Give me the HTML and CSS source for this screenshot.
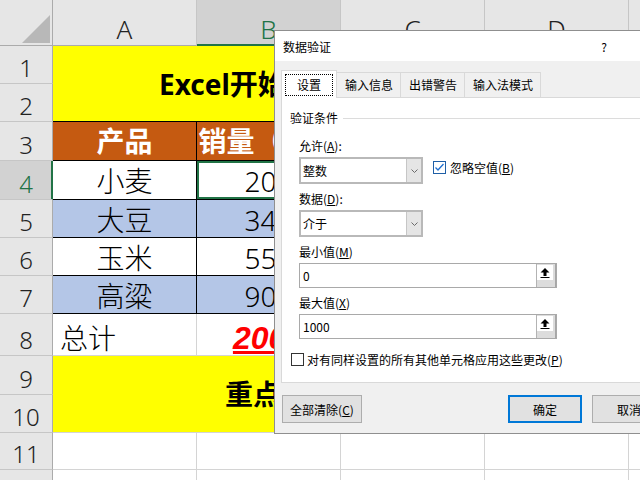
FILE: index.html
```html
<!DOCTYPE html>
<html lang="zh-CN">
<head>
<meta charset="utf-8">
<title>数据验证</title>
<link rel="stylesheet" href="styles.css">
</head>
<body>
<div class="sheet">
  <div class="corner"><svg width="28" height="28" viewBox="0 0 28 28"><polygon points="28,0 28,28 0,28" fill="#b8b8b8"/></svg></div>
  <div class="ch">A</div><div class="ch sel">B</div><div class="ch">C</div><div class="ch">D</div><div class="ch">E</div>

  <div class="rh">1</div>
  <div class="c banner top">Excel开始学习数据验证</div>
  <div class="rh">2</div>

  <div class="rh">3</div>
  <div class="c t hd">产品</div><div class="c t hd">销量（吨）</div><div class="c"></div><div class="c"></div><div class="c"></div>

  <div class="rh sel">4</div>
  <div class="c t d">小麦</div><div class="c t d cur">200</div><div class="c"></div><div class="c"></div><div class="c"></div>

  <div class="rh">5</div>
  <div class="c t d blue">大豆</div><div class="c t d blue">345</div><div class="c"></div><div class="c"></div><div class="c"></div>

  <div class="rh">6</div>
  <div class="c t d">玉米</div><div class="c t d">555</div><div class="c"></div><div class="c"></div><div class="c"></div>

  <div class="rh">7</div>
  <div class="c t d blue">高粱</div><div class="c t d blue">900</div><div class="c"></div><div class="c"></div><div class="c"></div>

  <div class="rh">8</div>
  <div class="c foot left">总计</div><div class="c foot total">2000</div><div class="c"></div><div class="c"></div><div class="c"></div>

  <div class="rh">9</div>
  <div class="c banner bottom">重点：数据验证设置</div>
  <div class="rh">10</div>

  <div class="rh">11</div>
  <div class="c"></div><div class="c"></div><div class="c"></div><div class="c"></div><div class="c"></div>

  <div class="rh">12</div>
  <div class="c"></div><div class="c"></div><div class="c"></div><div class="c"></div><div class="c"></div>
</div>

<div class="dlg">
  <div class="dlg-title">
    <span class="name">数据验证</span>
    <span class="tbtn">?</span>
    <span class="tbtn">✕</span>
  </div>
  <div class="dlg-body">
    <div class="tabs">
      <div class="tab active"><span class="focus">设置</span></div>
      <div class="tab">输入信息</div>
      <div class="tab">出错警告</div>
      <div class="tab">输入法模式</div>
    </div>
    <div class="panel">
      <div class="group"><span>验证条件</span><span class="rule"></span></div>
      <div class="fields">
        <div class="lbl first">允许(<u>A</u>):</div>
        <div class="row">
          <div class="combo"><span class="val">整数</span><span class="drop"><svg width="7" height="4" viewBox="0 0 7 4"><polyline points="0.5,0.5 3.5,3.5 6.5,0.5" fill="none" stroke="#6b6b6b" stroke-width="1"/></svg></span></div>
          <div class="chk ignore"><span class="box checked"><svg width="11" height="11" viewBox="0 0 11 11"><polyline points="1.5,5.5 4,8 9.5,2" fill="none" stroke="#1f6fcf" stroke-width="1.3"/></svg></span>忽略空值(<u>B</u>)</div>
        </div>
        <div class="lbl">数据(<u>D</u>):</div>
        <div class="combo"><span class="val">介于</span><span class="drop"><svg width="7" height="4" viewBox="0 0 7 4"><polyline points="0.5,0.5 3.5,3.5 6.5,0.5" fill="none" stroke="#6b6b6b" stroke-width="1"/></svg></span></div>
        <div class="lbl">最小值(<u>M</u>)</div>
        <div class="ref"><span class="val">0</span><span class="refbtn"><span class="face"><svg width="10" height="10" viewBox="0 0 10 10"><path d="M5 0 L9.5 4.5 L6.5 4.5 L6.5 8 L3.5 8 L3.5 4.5 L0.5 4.5 Z M0.5 9 H9.5 V10 H0.5 Z" fill="#000"/></svg></span></span></div>
        <div class="lbl">最大值(<u>X</u>)</div>
        <div class="ref"><span class="val">1000</span><span class="refbtn"><span class="face"><svg width="10" height="10" viewBox="0 0 10 10"><path d="M5 0 L9.5 4.5 L6.5 4.5 L6.5 8 L3.5 8 L3.5 4.5 L0.5 4.5 Z M0.5 9 H9.5 V10 H0.5 Z" fill="#000"/></svg></span></span></div>
      </div>
      <div class="chk apply"><span class="box"></span>对有同样设置的所有其他单元格应用这些更改(<u>P</u>)</div>
    </div>
    <div class="btns">
      <div class="btn clear">全部清除(<u>C</u>)</div>
      <div class="btn ok">确定</div>
      <div class="btn cancel">取消</div>
    </div>
  </div>
</div>
</body>
</html>
```
FILE: styles.css
```css
html, body {
  margin: 0;
  padding: 0;
}
body {
  width: 640px;
  height: 480px;
  overflow: hidden;
  position: relative;
  background: #fff;
  font-family: "Noto Sans", "Noto Sans CJK SC", sans-serif;
}

/* ---------- spreadsheet ---------- */
.sheet {
  display: grid;
  grid-template-columns: 53px repeat(5, 144px);
  grid-template-rows: 46px 38px 38px 39px 39px 38px 38px 38px 42px 39px 38px 37px 38px;
  width: max-content;
}
.sheet > div {
  box-sizing: border-box;
  min-width: 0;
}
.corner {
  background: #e6e6e6;
  border-right: 1px solid #ababab;
  border-bottom: 1px solid #ababab;
  display: flex;
  align-items: flex-end;
  justify-content: flex-end;
  padding: 0 2px 2px 0;
}
.corner svg { display: block; }
.ch {
  background: #e6e6e6;
  border-right: 1px solid #c6c6c6;
  border-bottom: 1px solid #ababab;
  display: flex;
  justify-content: center;
  align-items: flex-end;
  font-size: 26px;
  line-height: 32px;
  font-weight: 300;
  color: #222;
}
.ch.sel {
  background: #d2d2d2;
  color: #217346;
  border-bottom-color: #217346;
  box-shadow: inset 0 -1px 0 #217346;
}
.rh {
  grid-column: 1;
  background: #e6e6e6;
  border-right: 1px solid #ababab;
  border-bottom: 1px solid #c6c6c6;
  display: flex;
  justify-content: center;
  align-items: flex-end;
  font-size: 24px;
  line-height: 30px;
  font-weight: 300;
  color: #222;
}
.rh.sel {
  background: #d2d2d2;
  color: #217346;
  border-right-color: #217346;
  box-shadow: inset -1px 0 0 #217346;
}
.c {
  border-right: 1px solid #d4d4d4;
  border-bottom: 1px solid #d4d4d4;
  display: flex;
  align-items: center;
  justify-content: center;
  font-size: 28px;
  line-height: 30px;
  font-weight: 300;
  white-space: nowrap;
  overflow: hidden;
  color: #000;
}
.c.t { border-color: #000; }
.c.hd {
  background: #c55a11;
  color: #fff;
  font-weight: 700;
}
.c.d { padding-top: 2px; }
.c.blue { background: #b4c6e7; }
.c.cur { box-shadow: inset 0 0 0 2px #217346; }
.banner {
  grid-column: 2 / 7;
  background: #ffff00;
  justify-content: flex-start;
  font-weight: 700;
}
.banner.top {
  grid-row: 2 / 4;
  padding-left: 106px;
  border-bottom-color: #000;
}
.banner.bottom {
  grid-row: 10 / 12;
  padding-left: 172px;
}
.c.foot {
  align-items: flex-end;
  padding-bottom: 2px;
}
.c.left {
  justify-content: flex-start;
  padding-left: 7px;
}
.c.total {
  font-family: "Liberation Sans", Arial, sans-serif;
  font-size: 32px;
  font-weight: 700;
  font-style: italic;
  color: #ff0000;
  text-decoration: underline;
}

/* ---------- dialog ---------- */
.dlg {
  position: absolute;
  left: 274px;
  top: 30px;
  width: 400px;
  height: 404px;
  box-sizing: border-box;
  border: 1px solid #8f8f8f;
  background: #f0f0f0;
  font-family: "Noto Sans CJK SC", "Noto Sans", sans-serif;
  font-size: 12px;
  color: #000;
  display: flex;
  flex-direction: column;
}
.dlg-title {
  height: 30px;
  flex: none;
  background: #fff;
  display: flex;
  align-items: center;
  padding-left: 8px;
}
.dlg-title .name { flex: 1; }
.tbtn {
  width: 46px;
  text-align: center;
}
.dlg-body {
  flex: 1;
  display: flex;
  flex-direction: column;
  padding: 9px 7px 0 6px;
}
.tabs {
  display: flex;
  align-items: flex-end;
  height: 28px;
  margin-bottom: -1px;
  position: relative;
  z-index: 1;
}
.tab {
  box-sizing: border-box;
  height: 25px;
  margin-bottom: 1px;
  margin-left: -1px;
  padding: 0 7px 0 8px;
  border: 1px solid #d9d9d9;
  border-bottom: none;
  background: #f0f0f0;
  line-height: 24px;
  white-space: nowrap;
}
.tab.active {
  height: 28px;
  margin: 0;
  padding: 3px 3px 0;
  background: #fff;
  position: relative;
  z-index: 2;
}
.focus {
  display: block;
  border: 1px dotted #000;
  padding: 0 11px;
  line-height: 20px;
}
.panel {
  box-sizing: border-box;
  height: 286px;
  border: 1px solid #d9d9d9;
  background: #fff;
  padding: 11px 0 0 8px;
}
.group {
  display: flex;
  align-items: center;
  line-height: 17px;
}
.rule {
  flex: 1;
  height: 1px;
  background: #dcdcdc;
  margin: 2px 0 0 5px;
}
.fields { padding-left: 9px; }
.lbl {
  line-height: 17px;
  margin: 6px 0 3px;
}
.lbl.first { margin-top: 11px; }
.row {
  display: flex;
  align-items: flex-start;
}
.combo {
  box-sizing: border-box;
  width: 124px;
  height: 27px;
  border: 2px solid #b9b9b9;
  background: #fff;
  display: flex;
  align-items: center;
}
.val {
  flex: 1;
  padding-left: 2px;
  line-height: 17px;
}
.drop {
  width: 15px;
  align-self: stretch;
  box-sizing: border-box;
  background: #e5e5e5;
  border-left: 1px solid #c6c6c6;
  display: flex;
  align-items: center;
  justify-content: center;
}
.drop svg { display: block; }
.chk {
  display: flex;
  align-items: center;
  line-height: 17px;
  white-space: nowrap;
}
.chk.ignore {
  margin: 2px 0 0 10px;
}
.box {
  box-sizing: border-box;
  width: 13px;
  height: 13px;
  border: 1px solid #333;
  background: #fff;
  margin-right: 4px;
  display: flex;
  align-items: center;
  justify-content: center;
}
.box.checked { border-color: #1f5fa6; }
.box svg { display: block; }
.chk.apply {
  margin: 12px 0 0 1px;
}
.chk.apply .box { margin-right: 3px; }
.ref {
  box-sizing: border-box;
  width: 258px;
  height: 25px;
  border: 1px solid #a9a9a9;
  background: #fff;
  display: flex;
}
.ref .val {
  padding-left: 3px;
  line-height: 23px;
}
.refbtn {
  box-sizing: border-box;
  width: 20px;
  background: #dcdcdc;
  border-left: 1px solid #b3b3b3;
  border-right: 1px solid #a6a6a6;
  padding: 1px 0 0 0;
}
.face {
  display: flex;
  width: 16px;
  height: 15px;
  background: #fff;
  align-items: center;
  justify-content: center;
}
.face svg { display: block; }
.btns {
  display: flex;
  margin-top: 12px;
  padding-left: 1px;
}
.btn {
  box-sizing: border-box;
  height: 28px;
  border: 1px solid #adadad;
  background: #e1e1e1;
  display: flex;
  align-items: center;
  justify-content: center;
  white-space: nowrap;
}
.btn.clear { width: 80px; }
.btn.ok {
  width: 74px;
  margin-left: auto;
  border: 2px solid #0078d7;
}
.btn.cancel {
  width: 74px;
  margin-left: 10px;
}
```
